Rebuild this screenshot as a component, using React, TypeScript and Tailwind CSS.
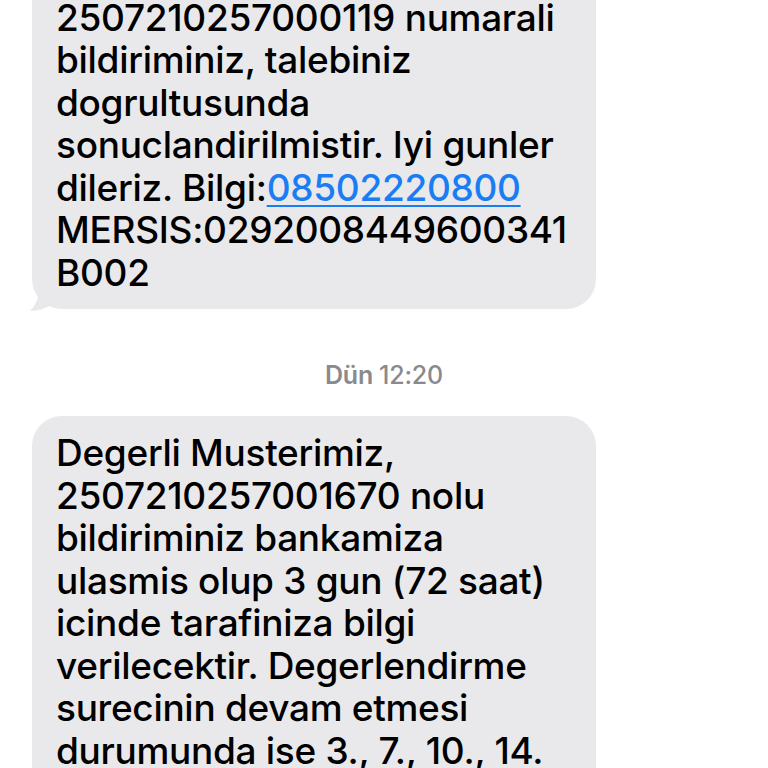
import React from "react";

const font = { fontFamily: "Inter, 'Noto Sans', sans-serif" };

function Tail() {
  return (
    <svg
      className="absolute left-[-12px] bottom-[-2px]"
      width="40"
      height="32"
      viewBox="0 0 40 32"
    >
      <path
        d="M20 0 C20 14 18 24 10 32 C20 32 30 28 36 22 L40 0 Z"
        fill="#e9e9eb"
      />
    </svg>
  );
}

export default function App() {
  const line = "block whitespace-nowrap";
  const bubble =
    "relative bg-[#e9e9eb] rounded-[30px] pl-[24px] pr-[12px] pt-[16px] pb-[15px] text-[37px] leading-[42.5px] text-black tracking-[-0.3px] font-medium";
  return (
    <div className="w-[768px] h-[768px] overflow-hidden bg-white" style={font}>
      <div className="flex flex-col mt-[-62px]">
        <div className="relative ml-[32px] w-[564px]">
          <Tail />
          <div className={bubble}>
            <span className={line}>Degerli Musterimiz,</span>
            <span className={line}>2507210257000119 numarali</span>
            <span className={line}>bildiriminiz, talebiniz</span>
            <span className={line}>dogrultusunda</span>
            <span className={line}>sonuclandirilmistir. Iyi gunler</span>
            <span className={line}>
              dileriz. Bilgi:
              <span className="text-[#1a7df4] underline decoration-[2px] underline-offset-[4px]">
                08502220800
              </span>
            </span>
            <span className={line}>MERSIS:0292008449600341</span>
            <span className={line}>B002</span>
          </div>
        </div>

        <div className="mt-[52px] h-[28px] flex justify-center items-center text-[25px] text-[#8a8a8e] leading-[28px] tracking-[-0.2px]">
          <span className="font-semibold">Dün</span>
          <span className="ml-[6px] font-medium">12:20</span>
        </div>

        <div className="relative ml-[32px] w-[564px] mt-[27px]">
          <div className={bubble}>
            <span className={line}>Degerli Musterimiz,</span>
            <span className={line}>2507210257001670 nolu</span>
            <span className={line}>bildiriminiz bankamiza</span>
            <span className={line}>ulasmis olup 3 gun (72 saat)</span>
            <span className={line}>icinde tarafiniza bilgi</span>
            <span className={line}>verilecektir. Degerlendirme</span>
            <span className={line}>surecinin devam etmesi</span>
            <span className={line}>durumunda ise 3., 7., 10., 14.</span>
            <span className={line}>gunlerde bilgilendirme</span>
            <span className={line}>yapilacaktir.</span>
          </div>
        </div>
      </div>
    </div>
  );
}
